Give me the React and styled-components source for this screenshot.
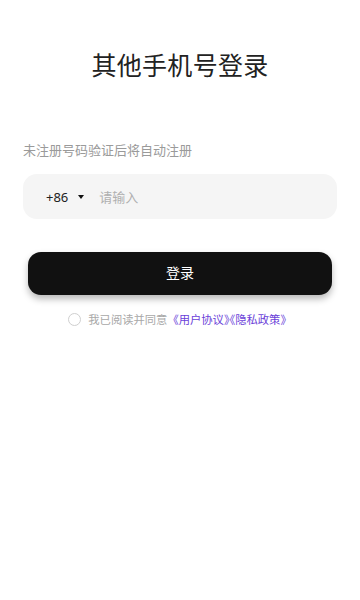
import React, { useState } from 'react';
import styled, { createGlobalStyle } from 'styled-components';

const GlobalStyle = createGlobalStyle`
  body {
    margin: 0;
    background: #fff;
    font-family: "Noto Sans CJK SC", "Noto Sans", sans-serif;
  }
`;

const Page = styled.div`
  width: 360px;
  min-height: 600px;
  box-sizing: border-box;
  padding: 0 23px;
  display: flex;
  flex-direction: column;
`;

const Title = styled.h1`
  margin: 47px 0 0;
  font-size: 25px;
  line-height: 35px;
  font-weight: 400;
  color: #222;
  text-align: center;
  letter-spacing: 0.3px;
`;

const Hint = styled.p`
  margin: 59px 0 0;
  font-size: 13px;
  line-height: 18px;
  color: #9a9a9a;
`;

const PhoneBox = styled.div`
  margin-top: 15px;
  height: 45px;
  border-radius: 14px;
  background: #f5f5f5;
  display: flex;
  align-items: center;
  padding-left: 23px;
`;

const Code = styled.span`
  font-family: "Noto Sans", sans-serif;
  font-size: 13px;
  color: #222;
`;

const Caret = styled.span`
  width: 0;
  height: 0;
  margin: 0 0 0 10px;
  border-left: 3px solid transparent;
  border-right: 3px solid transparent;
  border-top: 4px solid #111;
`;

const PhoneInput = styled.input`
  flex: 1;
  margin-left: 15px;
  border: none;
  outline: none;
  background: transparent;
  font-family: inherit;
  font-size: 13px;
  color: #222;
  padding: 0;

  &::placeholder {
    color: #b0b0b0;
  }
`;

const LoginButton = styled.button`
  margin: 33px 5px 0;
  height: 43px;
  padding: 0 0 3px;
  border: none;
  border-radius: 13px;
  background: #111;
  color: #fff;
  font-family: inherit;
  font-size: 14px;
  box-shadow: 0 4px 7px rgba(0, 0, 0, 0.28);
`;

const Agreement = styled.label`
  margin-top: 17px;
  display: flex;
  align-items: center;
  justify-content: center;
`;

const Radio = styled.span`
  flex: none;
  width: 13px;
  height: 13px;
  box-sizing: border-box;
  border-radius: 50%;
  border: 1px solid ${(p) => (p.checked ? '#6b3fd9' : '#cfcfcf')};
  background: ${(p) => (p.checked ? '#6b3fd9' : 'transparent')};
  margin-right: 7px;
`;

const AgreeText = styled.span`
  white-space: nowrap;
  font-size: 11.3px;
  line-height: 14px;
  color: #a8a8a8;
`;

const Link = styled.span`
  color: #6b3fd9;
`;

// half-width closing mark so the two titles sit close together
const Tight = styled.span`
  font-feature-settings: "halt";
`;

export default function App() {
  const [agreed, setAgreed] = useState(false);

  return (
    <Page>
      <GlobalStyle />
      <Title>其他手机号登录</Title>
      <Hint>未注册号码验证后将自动注册</Hint>
      <PhoneBox>
        <Code>+86</Code>
        <Caret />
        <PhoneInput placeholder="请输入" />
      </PhoneBox>
      <LoginButton>登录</LoginButton>
      <Agreement onClick={() => setAgreed((v) => !v)}>
        <Radio checked={agreed} />
        <AgreeText>
          我已阅读并同意<Link>《用户协议<Tight>》</Tight>《隐私政策》</Link>
        </AgreeText>
      </Agreement>
    </Page>
  );
}
